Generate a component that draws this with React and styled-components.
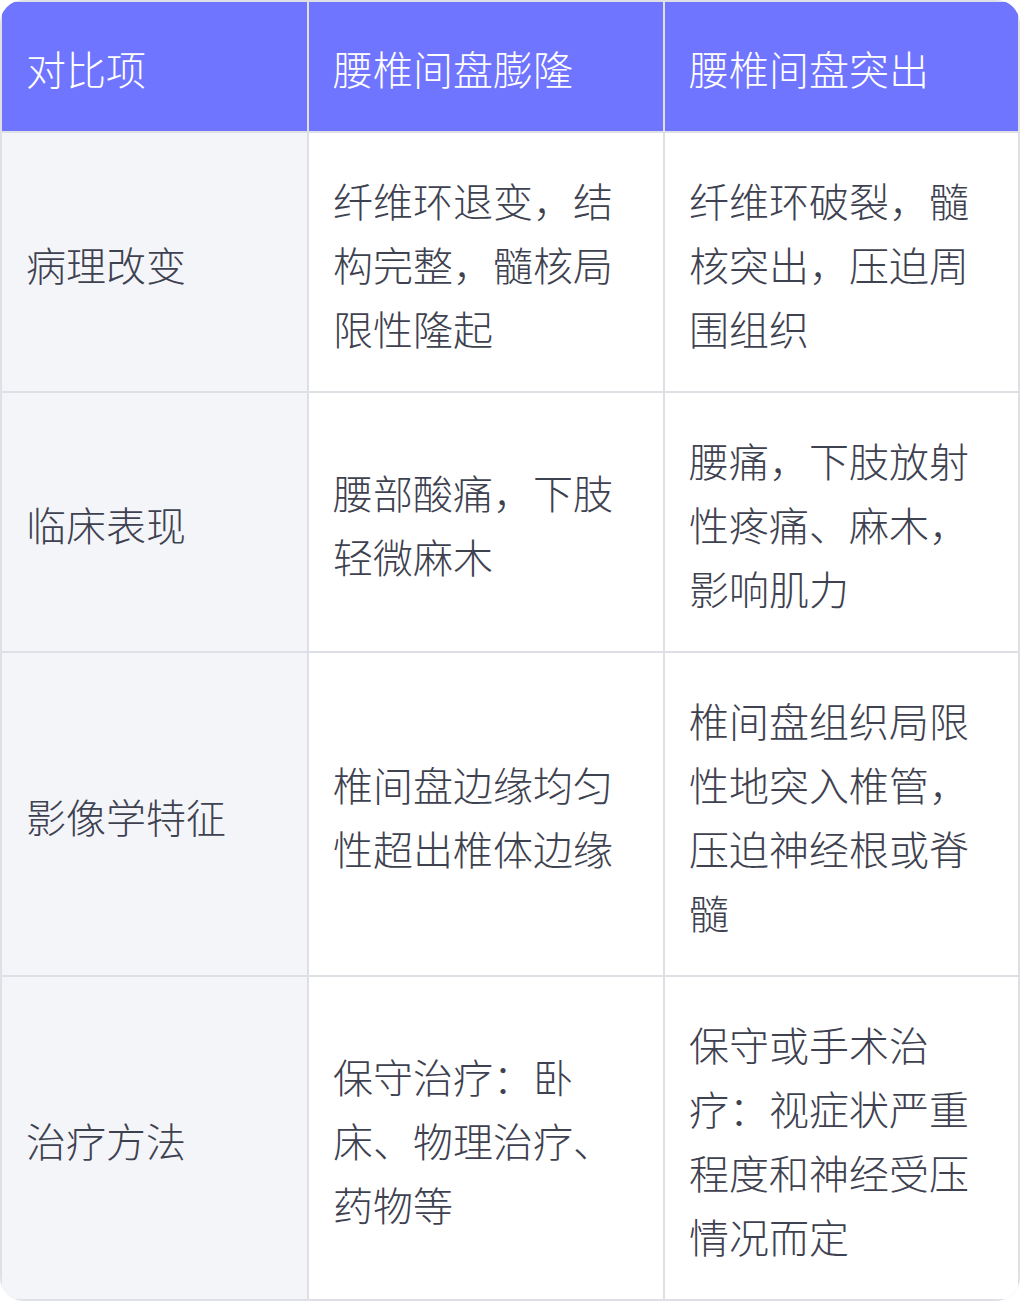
import React from 'react';
import styled, { createGlobalStyle } from 'styled-components';

const GlobalStyle = createGlobalStyle`
  html, body {
    margin: 0;
    padding: 0;
    background: #ffffff;
  }
  body {
    font-family: "Noto Sans CJK SC", "Noto Sans", sans-serif;
  }
`;

const Table = styled.div`
  width: 1020px;
  box-sizing: border-box;
  display: grid;
  grid-template-columns: 305px 354px 1fr;
  gap: 2px;
  padding: 2px;
  background: #dfe0e5;
  border-radius: 24px;
  overflow: hidden;
`;

const Cell = styled.div`
  display: flex;
  align-items: center;
  padding: ${({ $head }) => ($head ? '34px 24px 31px' : '35px 24px 31px')};
  background: ${({ $head, $label }) =>
    $head ? '#7075ff' : $label ? '#f4f5f9' : '#ffffff'};
  color: ${({ $head }) => ($head ? '#ffffff' : '#3e4150')};
  font-size: 40px;
  line-height: 64px;
  font-weight: 300;
`;

const CellText = styled.div`
  width: 100%;
`;

const headers = ['对比项', '腰椎间盘膨隆', '腰椎间盘突出'];

const rows = [
  ['病理改变', '纤维环退变，结构完整，髓核局限性隆起', '纤维环破裂，髓核突出，压迫周围组织'],
  ['临床表现', '腰部酸痛，下肢轻微麻木', '腰痛，下肢放射性疼痛、麻木，影响肌力'],
  ['影像学特征', '椎间盘边缘均匀性超出椎体边缘', '椎间盘组织局限性地突入椎管，压迫神经根或脊髓'],
  ['治疗方法', '保守治疗：卧床、物理治疗、药物等', '保守或手术治疗：视症状严重程度和神经受压情况而定'],
];

const App = () => (
  <>
    <GlobalStyle />
    <Table>
      {headers.map((h) => (
        <Cell key={h} $head>
          <CellText>{h}</CellText>
        </Cell>
      ))}
      {rows.map((row) =>
        row.map((text, i) => (
          <Cell key={row[0] + i} $label={i === 0}>
            <CellText>{text}</CellText>
          </Cell>
        ))
      )}
    </Table>
  </>
);

export default App;
